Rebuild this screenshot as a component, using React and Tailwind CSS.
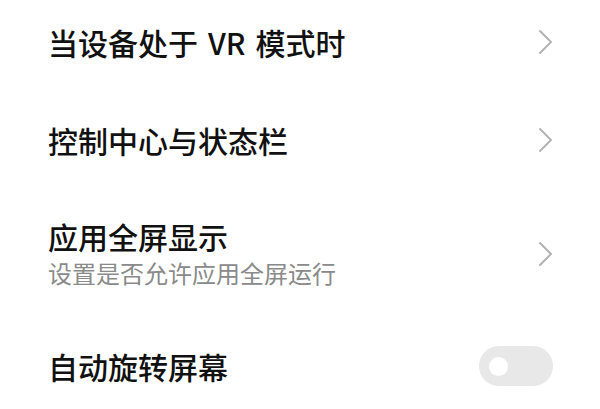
const rows = [
    { key: 'vr', title: <>当设备处于<span className="mx-[10px]">VR</span>模式时</>, type: 'link', h: 'h-[84px]' },
    { key: 'cc', title: '控制中心与状态栏', type: 'link', h: 'h-[112px]' },
    { key: 'fs', title: '应用全屏显示', sub: '设置是否允许应用全屏运行', type: 'link', h: 'h-[116px]' },
    { key: 'rot', title: '自动旋转屏幕', type: 'toggle', h: 'h-[108px]' },
];

const Chevron = () => (
    <svg width="16" height="26" viewBox="0 0 16 26" fill="none">
        <polyline points="3,2 14,13 3,24" stroke="#b3b3b3" strokeWidth="2" strokeLinecap="round" strokeLinejoin="round" />
    </svg>
);

const Toggle = () => (
    <div className="w-[74px] h-[40px] rounded-full bg-[#e8e8e8] flex items-center pl-[10px]">
        <div className="w-[19px] h-[19px] rounded-full bg-white" />
    </div>
);

export default function App() {
    return (
        <div
            className="w-[600px] h-[409px] bg-white overflow-hidden"
            style={{ fontFamily: '"Noto Sans CJK SC", "Noto Sans", sans-serif' }}
        >
            {rows.map((row) => (
                <div key={row.key} className={`${row.h} flex items-center justify-between pl-[48px] pr-[47px]`}>
                    <div className="flex flex-col">
                        <p className="text-[30px] leading-[35px] font-medium text-[#111111]">{row.title}</p>
                        {row.sub && (
                            <p className="mt-[3px] text-[24px] leading-[32px] text-[#8a8a8a]">{row.sub}</p>
                        )}
                    </div>
                    {row.type === 'link' ? <Chevron /> : <Toggle />}
                </div>
            ))}
        </div>
    );
}
